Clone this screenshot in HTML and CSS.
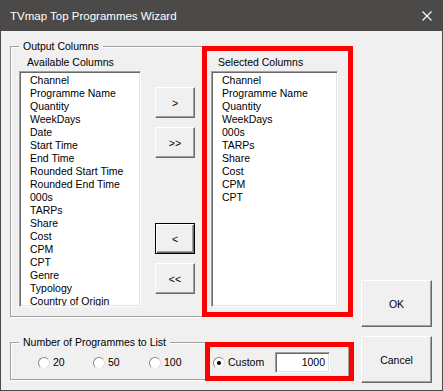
FILE: index.html
```html
<!DOCTYPE html>
<html>
<head>
<meta charset="utf-8">
<link rel="stylesheet" href="styles.css">
</head>
<body>
<div class="window">
  <div class="titlebar">
    <span class="title">TVmap Top Programmes Wizard</span>
    <svg class="close" width="10" height="10" viewBox="0 0 10 10"><path d="M0.5 0.5 L9.5 9.5 M9.5 0.5 L0.5 9.5" stroke="#fff" stroke-width="1.1" fill="none"/></svg>
  </div>
  <div class="content">
    <div class="left">
      <div class="group output">
        <span class="legend">Output Columns</span>
        <div class="col avail">
          <div class="label">Available Columns</div>
          <ul class="list">
            <li>Channel</li><li>Programme Name</li><li>Quantity</li><li>WeekDays</li><li>Date</li><li>Start Time</li><li>End Time</li><li>Rounded Start Time</li><li>Rounded End Time</li><li>000s</li><li>TARPs</li><li>Share</li><li>Cost</li><li>CPM</li><li>CPT</li><li>Genre</li><li>Typology</li><li>Country of Origin</li>
          </ul>
        </div>
        <div class="movers">
          <button class="btn mv">&gt;</button>
          <button class="btn mv">&gt;&gt;</button>
          <button class="btn mv focus spaced">&lt;</button>
          <button class="btn mv">&lt;&lt;</button>
        </div>
        <div class="col sel">
          <div class="label">Selected Columns</div>
          <ul class="list">
            <li>Channel</li><li>Programme Name</li><li>Quantity</li><li>WeekDays</li><li>000s</li><li>TARPs</li><li>Share</li><li>Cost</li><li>CPM</li><li>CPT</li>
          </ul>
        </div>
      </div>
      <div class="group number">
        <span class="legend">Number of Programmes to List</span>
        <label class="opt w55"><span class="radio"></span>20</label>
        <label class="opt w56"><span class="radio"></span>50</label>
        <label class="opt w64"><span class="radio"></span>100</label>
        <label class="opt w62"><span class="radio checked"></span>Custom</label>
        <div class="textbox">1000</div>
      </div>
    </div>
    <div class="right">
      <button class="btn big">OK</button>
      <button class="btn big">Cancel</button>
    </div>
  </div>
  <div class="hl hl1"></div>
  <div class="hl hl2"></div>
</div>
</body>
</html>
```
FILE: styles.css
```css
* { box-sizing: border-box; }
html, body { margin: 0; padding: 0; }
body {
  background: #f0f0f0;
  font-family: "Liberation Sans", Arial, sans-serif;
  font-size: 10.5px;
  color: #000;
}
.window {
  position: relative;
  width: 443px;
  height: 391px;
  border: 1px solid #4c4a48;
  border-top: 0;
  background: #f0f0f0;
  display: flex;
  flex-direction: column;
}
.titlebar {
  height: 31px;
  margin: 0 -1px;
  background: #4c4a48;
  color: #fff;
  display: flex;
  align-items: center;
  justify-content: space-between;
  padding: 0 11px 0 10px;
  flex: none;
}
.title { font-size: 11.5px; line-height: 14px; }
.close { display: block; }
.content {
  flex: 1;
  display: flex;
  padding: 15px 10px 7px 9px;
  gap: 12px;
}
.left { width: 339px; display: flex; flex-direction: column; gap: 25px; margin-bottom: 3px; }
.right { width: 71px; display: flex; flex-direction: column; justify-content: flex-end; gap: 9px; }
.group {
  position: relative;
  border: 1px solid #a0a0a0;
  box-shadow: inset 1px 1px 0 #fff, 1px 1px 0 #fff;
}
.legend {
  position: absolute;
  top: -7px;
  left: 8px;
  padding: 0 4px;
  background: #f0f0f0;
  line-height: 13px;
}
.output {
  height: 271px;
  display: flex;
  padding: 9px 10px 9px 8px;
}
.col { display: flex; flex-direction: column; }
.avail { width: 122px; }
.sel { width: 127px; margin-left: 16px; }
.label { line-height: 13px; height: 13px; margin-bottom: 2px; padding-left: 8px; white-space: nowrap; }
.sel .label { padding-left: 7px; }
.list {
  list-style: none;
  margin: 0;
  height: 236px;
  background: #fff;
  border: 1px solid;
  border-color: #a0a0a0 #fff #fff #a0a0a0;
  box-shadow: inset 1px 1px 0 #696969, inset -1px -1px 0 #e3e3e3;
  padding: 2px 0 0 10px;
  line-height: 13px;
  white-space: nowrap;
  overflow: hidden;
}
.movers {
  width: 40px;
  margin-left: 14px;
  padding-top: 31px;
  display: flex;
  flex-direction: column;
  gap: 9px;
}
.btn {
  font-family: "Liberation Sans", Arial, sans-serif;
  font-size: 10.5px;
  color: #000;
  background: #f0f0f0;
  border: 1px solid;
  border-color: #fff #696969 #696969 #fff;
  box-shadow: inset -1px -1px 0 #a0a0a0, inset 1px 1px 0 #f0f0f0;
  padding: 0;
  margin: 0;
  display: flex;
  align-items: center;
  justify-content: center;
}
.mv { width: 40px; height: 31px; }
.mv.spaced { margin-top: 56px; }
.focus {
  border: 1px solid #000;
  box-shadow: inset 1px 1px 0 #fff, inset -1px -1px 0 #696969, inset -2px -2px 0 #a0a0a0;
}
.big { width: 71px; height: 47px; }
.number {
  height: 38px;
  display: flex;
  align-items: center;
  padding: 3px 0 0 27px;
}
.opt { display: flex; align-items: center; line-height: 13px; }
.w55 { width: 55px; }
.w56 { width: 56px; }
.w64 { width: 64px; }
.w62 { width: 62px; }
.radio {
  width: 12px;
  height: 12px;
  border-radius: 50%;
  background: #fff;
  border: 1px solid;
  border-color: #8c8c8c #dcdcdc #e8e8e8 #8c8c8c;
  margin-right: 3px;
  position: relative;
  flex: none;
}
.radio.checked::after {
  content: "";
  position: absolute;
  left: 3px;
  top: 3px;
  width: 4px;
  height: 4px;
  border-radius: 50%;
  background: #000;
}
.textbox {
  width: 55px;
  height: 21px;
  background: #fff;
  border: 1px solid;
  border-color: #a0a0a0 #fff #fff #a0a0a0;
  box-shadow: inset 1px 1px 0 #696969, inset -1px -1px 0 #e3e3e3;
  text-align: right;
  padding: 0 4px 0 0;
  line-height: 19px;
}
.hl {
  position: absolute;
  border: 5px solid #f00;
  pointer-events: none;
}
.hl1 { left: 201px; top: 46px; width: 151px; height: 271px; }
.hl2 { left: 204px; top: 342px; width: 149px; height: 39px; }
```
